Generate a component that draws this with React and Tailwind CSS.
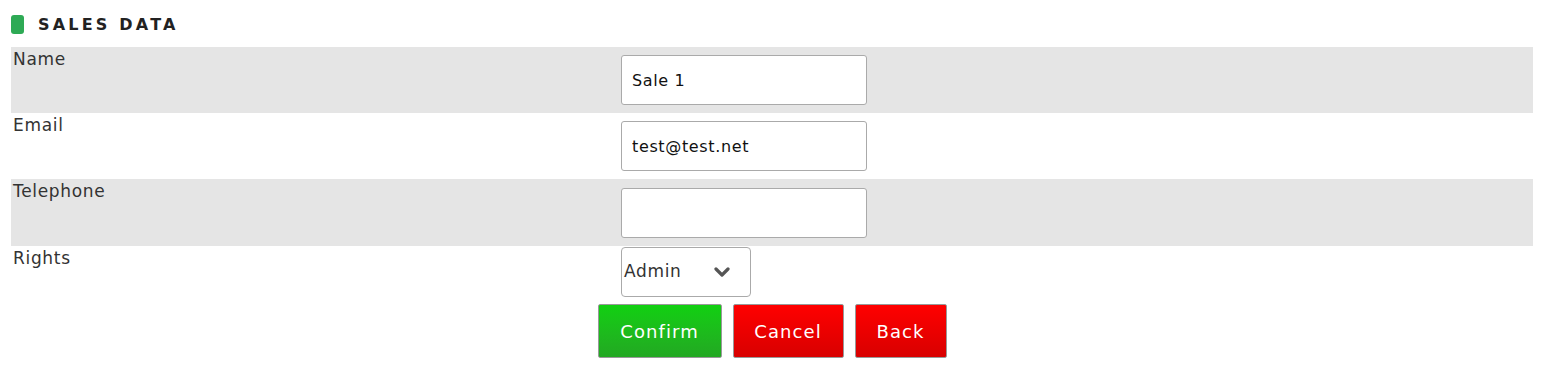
import React from "react";

const font = { fontFamily: '"DejaVu Sans", "Open Sans", sans-serif' };

function Chevron() {
  return (
    <svg width="16" height="10" viewBox="0 0 16 10" className="text-[#555]">
      <path d="M2 2 L8 8 L14 2" fill="none" stroke="currentColor" strokeWidth="3.2" strokeLinecap="round" strokeLinejoin="round" />
    </svg>
  );
}

function Row({ label, shaded, children, h, top }) {
  return (
    <div className={`grid grid-cols-[610px_1fr] ${shaded ? "bg-[#e5e5e5]" : "bg-white"} ${h}`}>
      <div className="pl-[2px] text-[17px] leading-[24px] text-[#333] tracking-[0.04em]">{label}</div>
      <div className={top}>{children}</div>
    </div>
  );
}

function TextInput({ value }) {
  return (
    <input
      readOnly
      value={value}
      className="block w-[246px] h-[50px] border border-[#aaa] rounded-[3px] bg-white pl-[10px] text-[16px] text-[#111] tracking-[0.04em] outline-none"
      style={font}
    />
  );
}

export default function App() {
  return (
    <div className="bg-white w-[1556px] h-[391px]" style={font}>
      <div className="flex items-start pt-[15px] pl-[11px] h-[47px]">
        <div className="w-[13px] h-[19px] rounded-[3px] bg-[#2eaa55]" />
        <div className="ml-[14px] text-[16px] font-bold tracking-[0.2em] text-[#222] leading-[19px]">SALES DATA</div>
      </div>
      <div className="ml-[11px] w-[1522px]">
        <Row label="Name" shaded h="h-[66px]" top="pt-[8px]">
          <TextInput value="Sale 1" />
        </Row>
        <Row label="Email" h="h-[66px]" top="pt-[8px]">
          <TextInput value="test@test.net" />
        </Row>
        <Row label="Telephone" shaded h="h-[67px]" top="pt-[9px]">
          <TextInput value="" />
        </Row>
        <Row label="Rights" h="h-[51px]" top="pt-[1px]">
          <div className="flex items-center justify-between w-[130px] h-[50px] border border-[#aaa] rounded-[4px] bg-white pl-[2px] pr-[20px]">
            <span className="text-[17px] text-[#333] tracking-[0.04em]">Admin</span>
            <Chevron />
          </div>
        </Row>
        <div className="flex justify-center gap-[11px] mt-[7px]">
          <button className="w-[124px] h-[54px] border border-[#999] rounded-[2px] bg-gradient-to-b from-[#10d010] to-[#22a822] text-white text-[18px] tracking-[0.06em]" style={font}>Confirm</button>
          <button className="w-[111px] h-[54px] border border-[#999] rounded-[2px] bg-gradient-to-b from-[#ff0000] to-[#d80000] text-white text-[18px] tracking-[0.06em]" style={font}>Cancel</button>
          <button className="w-[92px] h-[54px] border border-[#999] rounded-[2px] bg-gradient-to-b from-[#ff0000] to-[#d80000] text-white text-[18px] tracking-[0.06em]" style={font}>Back</button>
        </div>
      </div>
    </div>
  );
}
